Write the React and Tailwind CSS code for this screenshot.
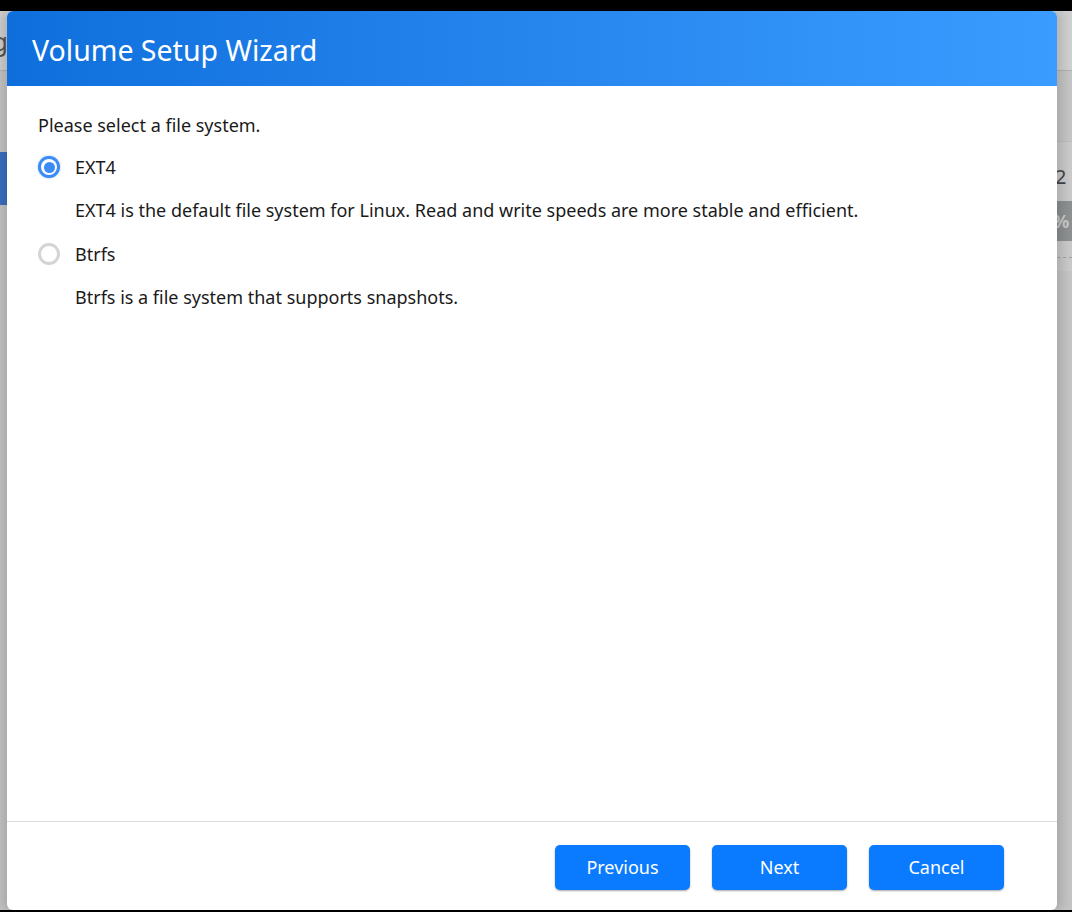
import { useState } from 'react';

const options = [
  { id: 'ext4', label: 'EXT4', desc: 'EXT4 is the default file system for Linux. Read and write speeds are more stable and efficient.' },
  { id: 'btrfs', label: 'Btrfs', desc: 'Btrfs is a file system that supports snapshots.' },
];

const Radio = ({ checked }) => (
  checked ? (
    <span className="w-[22px] h-[22px] rounded-full bg-[#3b8cf5] flex items-center justify-center shadow-[0_0_2px_rgba(59,140,245,0.6)]">
      <span className="w-[16px] h-[16px] rounded-full bg-white flex items-center justify-center">
        <span className="w-[11px] h-[11px] rounded-full bg-[#3b8cf5]" />
      </span>
    </span>
  ) : (
    <span className="w-[22px] h-[22px] rounded-full border-[3px] border-[#d4d4d4] bg-white" />
  )
);

const FooterButton = ({ children }) => (
  <button className="w-[135px] h-[45px] rounded-[5px] bg-[#0a7bff] text-white text-[18px] shadow-[0_1px_2px_rgba(0,0,0,0.35)]">{children}</button>
);

export default function App() {
  const [fs, setFs] = useState('ext4');

  return (
    <div className="relative w-full h-[912px] bg-black overflow-hidden" style={{ fontFamily: '"Noto Sans", "Open Sans", sans-serif' }}>
      {/* dimmed page behind the wizard */}
      <div className="absolute left-0 right-0 top-[11px] h-[899px] bg-[#c4c4c4]">
        <div className="h-[60px] border-b border-[#b0b0b0] bg-[#cfcfcf] text-[26px] text-[#555] leading-[60px] -ml-[8px]">g</div>
        <div className="mt-[81px] h-[53px] w-[20px] bg-[#3b6fc0]" />
        <div className="absolute right-0 top-[130px] w-[20px] h-[130px] bg-[#c9c9c9]">
          <div className="h-[60px] border-t border-[#bdbdbd] text-[20px] text-[#444] leading-[70px] pl-[3px]">2</div>
          <div className="h-[40px] bg-[#8d9090] text-[18px] font-bold text-[#c9c9c9] leading-[40px] pl-[1px]">%</div>
          <div className="mt-[16px] border-t border-dashed border-[#a0a0a0]" />
        </div>
      </div>

      <div className="absolute left-[7px] top-[11px] w-[1050px] h-[899px] bg-white rounded-[6px] flex flex-col shadow-[-6px_0_8px_rgba(0,0,0,0.12),6px_0_8px_rgba(0,0,0,0.12)]">
        <div className="h-[75px] rounded-t-[6px] bg-gradient-to-r from-[#0e6fdc] to-[#3a9cff] flex items-center px-[25px] pt-[4px]">
          <h1 className="text-white text-[28.5px]">Volume Setup Wizard</h1>
        </div>

        <div className="flex-1 px-[31px] pt-[26px] text-[18px] text-[#1a1a1a]">
          <p className="leading-[26px]">Please select a file system.</p>
          <div className="mt-[7px]">
            {options.map(o => (
              <div key={o.id}>
                <label className="flex items-center gap-[15px] h-[44px] cursor-pointer" onClick={() => setFs(o.id)}>
                  <Radio checked={fs === o.id} />
                  <span>{o.label}</span>
                </label>
                <p className="pl-[37px] h-[43px] leading-[43px]">{o.desc}</p>
              </div>
            ))}
          </div>
        </div>

        <div className="h-[89px] border-t border-[#dcdcdc] flex justify-end items-start gap-[22px] pt-[23px] pr-[53px]">
          <FooterButton>Previous</FooterButton>
          <FooterButton>Next</FooterButton>
          <FooterButton>Cancel</FooterButton>
        </div>
      </div>
    </div>
  );
}
